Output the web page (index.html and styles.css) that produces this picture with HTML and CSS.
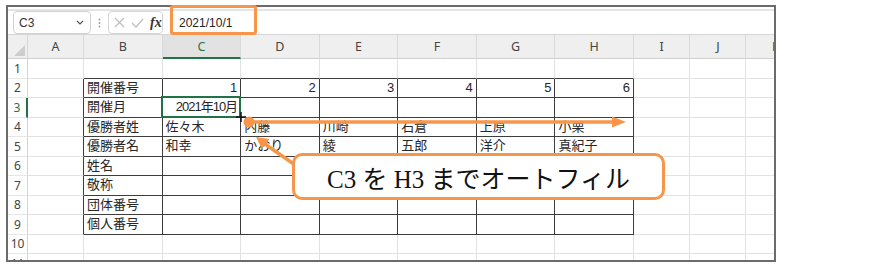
FILE: index.html
```html
<!DOCTYPE html>
<html lang="ja">
<head>
    <meta charset="UTF-8">
    <title>オートフィル</title>
    <link rel="stylesheet" href="styles.css">
</head>
<body>
<div class="page">
    <div class="frame">
        <div class="formula-bar">
            <div class="name-box">
                <span>C3</span>
                <svg width="8" height="5" viewBox="0 0 8 5"><path d="M1 1 L4 4 L7 1" fill="none" stroke="#555" stroke-width="1.2"/></svg>
            </div>
            <div class="bar-dots">
                <svg width="3" height="10" viewBox="0 0 3 10"><circle cx="1.5" cy="1.5" r="0.9" fill="#999"/><circle cx="1.5" cy="5" r="0.9" fill="#999"/><circle cx="1.5" cy="8.5" r="0.9" fill="#999"/></svg>
            </div>
            <div class="fx-box">
                <svg width="11" height="11" viewBox="0 0 11 11"><path d="M1 1 L10 10 M10 1 L1 10" stroke="#bdbdbd" stroke-width="1.2"/></svg>
                <svg width="13" height="10" viewBox="0 0 13 10"><path d="M1 5 L5 9 L12 1" fill="none" stroke="#bdbdbd" stroke-width="1.2"/></svg>
                <span class="fx">fx</span>
            </div>
            <div class="formula">2021/10/1</div>
        </div>

        <div class="sheet">
            <div class="corner"></div>
            <div class="hd">A</div><div class="hd">B</div><div class="hd on">C</div><div class="hd">D</div><div class="hd">E</div><div class="hd">F</div><div class="hd">G</div><div class="hd">H</div><div class="hd">I</div><div class="hd">J</div><div class="hd">K</div>

            <div class="rn">1</div>
            <div class="c"></div><div class="c u"></div><div class="c u"></div><div class="c u"></div><div class="c u"></div><div class="c u"></div><div class="c u"></div><div class="c u"></div><div class="c"></div><div class="c"></div><div class="c"></div>

            <div class="rn">2</div>
            <div class="c l"></div><div class="c t">開催番号</div><div class="c t n">1</div><div class="c t n">2</div><div class="c t n">3</div><div class="c t n">4</div><div class="c t n">5</div><div class="c t n">6</div><div class="c"></div><div class="c"></div><div class="c"></div>

            <div class="rn on">3</div>
            <div class="c l"></div><div class="c t">開催月</div><div class="c t n sel">2021年10月</div><div class="c t"></div><div class="c t"></div><div class="c t"></div><div class="c t"></div><div class="c t"></div><div class="c"></div><div class="c"></div><div class="c"></div>

            <div class="rn">4</div>
            <div class="c l"></div><div class="c t">優勝者姓</div><div class="c t">佐々木</div><div class="c t">内藤</div><div class="c t">川崎</div><div class="c t">石倉</div><div class="c t">上原</div><div class="c t">小栗</div><div class="c"></div><div class="c"></div><div class="c"></div>

            <div class="rn">5</div>
            <div class="c l"></div><div class="c t">優勝者名</div><div class="c t">和幸</div><div class="c t">かおり</div><div class="c t">綾</div><div class="c t">五郎</div><div class="c t">洋介</div><div class="c t">真紀子</div><div class="c"></div><div class="c"></div><div class="c"></div>

            <div class="rn">6</div>
            <div class="c l"></div><div class="c t">姓名</div><div class="c t"></div><div class="c t"></div><div class="c t"></div><div class="c t"></div><div class="c t"></div><div class="c t"></div><div class="c"></div><div class="c"></div><div class="c"></div>

            <div class="rn">7</div>
            <div class="c l"></div><div class="c t">敬称</div><div class="c t"></div><div class="c t"></div><div class="c t"></div><div class="c t"></div><div class="c t"></div><div class="c t"></div><div class="c"></div><div class="c"></div><div class="c"></div>

            <div class="rn">8</div>
            <div class="c l"></div><div class="c t">団体番号</div><div class="c t"></div><div class="c t"></div><div class="c t"></div><div class="c t"></div><div class="c t"></div><div class="c t"></div><div class="c"></div><div class="c"></div><div class="c"></div>

            <div class="rn">9</div>
            <div class="c l"></div><div class="c t">個人番号</div><div class="c t"></div><div class="c t"></div><div class="c t"></div><div class="c t"></div><div class="c t"></div><div class="c t"></div><div class="c"></div><div class="c"></div><div class="c"></div>

            <div class="rn">10</div>
            <div class="c"></div><div class="c"></div><div class="c"></div><div class="c"></div><div class="c"></div><div class="c"></div><div class="c"></div><div class="c"></div><div class="c"></div><div class="c"></div><div class="c"></div>

            <div class="rn">11</div>
            <div class="c"></div><div class="c"></div><div class="c"></div><div class="c"></div><div class="c"></div><div class="c"></div><div class="c"></div><div class="c"></div><div class="c"></div><div class="c"></div><div class="c"></div>
        </div>
    </div>

    <!-- annotations -->
    <div class="highlight"></div>
    <svg class="arrows" width="889" height="266" viewBox="0 0 889 266">
        <path d="M236 117 H246 M241 112 V122" stroke="#111" stroke-width="1.5"/>
        <circle cx="249" cy="122" r="5.5" fill="#f7964a"/>
        <path d="M249 122 H614" stroke="#f7964a" stroke-width="3.5"/>
        <polygon points="612,116.5 626,122 612,127.5" fill="#f7964a"/>
        <path d="M298 167 L265 144" stroke="#f7964a" stroke-width="3.5"/>
        <polygon points="256,137 269.5,139 262,149" fill="#f7964a"/>
    </svg>
    <div class="callout">C3 を H3 までオートフィル</div>
</div>
</body>
</html>
```

FILE: styles.css
```css
* {
    margin: 0;
    padding: 0;
    box-sizing: border-box;
}

body {
    background: #fff;
    font-family: "Noto Sans", sans-serif;
    color: #222;
}

.page {
    position: relative;
    width: 889px;
    height: 266px;
    padding: 5px 0 0 6px;
}

.frame {
    width: 770px;
    height: 257px;
    border: 2px solid #6b6b6b;
    overflow: hidden;
}

/* formula bar */
.formula-bar {
    display: flex;
    height: 26px;
    margin-top: 2px;
    padding-left: 5px;
    border-top: 2px solid #e4e4e4;
    border-bottom: 1px solid #d6d6d6;
}

.name-box {
    width: 78px;
    display: flex;
    align-items: center;
    justify-content: space-between;
    padding: 0 6px 0 5px;
    border: 1px solid #d2d2d2;
    border-radius: 4px;
    font-family: "Liberation Sans", sans-serif;
    font-size: 12px;
    color: #333;
}

.bar-dots {
    width: 17px;
    display: flex;
    align-items: center;
    justify-content: center;
}

.fx-box {
    width: 55px;
    display: flex;
    align-items: center;
    gap: 6px;
    padding-left: 5px;
    border: 1px solid #d6d6d6;
    border-radius: 4px;
}

.fx {
    font-family: "Liberation Serif", serif;
    font-style: italic;
    font-weight: bold;
    font-size: 14px;
    color: #333;
}

.formula {
    flex: 1;
    display: flex;
    align-items: center;
    margin-left: 7px;
    padding-left: 9px;
    font-family: "Liberation Sans", sans-serif;
    font-size: 12px;
    color: #222;
}

/* sheet grid */
.sheet {
    display: grid;
    grid-template-columns: 20px 56px repeat(7, 78.57px) 56.5px 56px 60px;
    grid-template-rows: 24px repeat(11, 19.5px);
    width: max-content;
}

.corner {
    position: relative;
    background: #efefef;
    border-right: 1px solid #d6d6d6;
    border-bottom: 1px solid #cfcfcf;
}

.corner::after {
    content: "";
    position: absolute;
    right: 2px;
    bottom: 2px;
    border-left: 11px solid transparent;
    border-bottom: 11px solid #cdcdcd;
}

.hd {
    display: flex;
    align-items: center;
    justify-content: center;
    background: #efefef;
    border-right: 1px solid #d9d9d9;
    border-bottom: 1px solid #cfcfcf;
    font-size: 12.5px;
    color: #444;
}

.hd.on {
    background: #e2e2e2;
    color: #217346;
    border-bottom: 2px solid #217346;
}

.rn {
    display: flex;
    align-items: center;
    justify-content: center;
    border-right: 1px solid #d4d4d4;
    border-bottom: 1px solid #e6e6e6;
    font-size: 12px;
    color: #444;
}

.rn.on {
    color: #217346;
    border-right: 2px solid #217346;
}

.c {
    padding: 0 3px;
    border-right: 1px solid #e2e2e2;
    border-bottom: 1px solid #e2e2e2;
    font-family: "Liberation Sans", "Noto Sans CJK JP", sans-serif;
    font-size: 13px;
    line-height: 18px;
    white-space: nowrap;
    overflow: hidden;
    color: #262626;
}

.c.u {
    border-bottom-color: #3d3d3d;
}

.c.l {
    border-right-color: #3d3d3d;
}

.c.t {
    border-right-color: #3d3d3d;
    border-bottom-color: #3d3d3d;
}

.c.n {
    text-align: right;
}

.c.sel {
    position: relative;
    overflow: visible;
    letter-spacing: -1px;
}

.c.sel::after {
    content: "";
    position: absolute;
    left: -2px;
    top: -2px;
    right: -1px;
    bottom: -1px;
    border: 2px solid #217346;
}

/* annotations */
.highlight {
    position: absolute;
    left: 170px;
    top: 5px;
    width: 87px;
    height: 30px;
    border: 3px solid #f7964a;
    border-radius: 3px;
}

.arrows {
    position: absolute;
    left: 0;
    top: 0;
}

.callout {
    position: absolute;
    left: 292px;
    top: 153px;
    width: 373px;
    height: 47px;
    display: flex;
    align-items: center;
    justify-content: center;
    background: #fff;
    border: 3px solid #f7964a;
    border-radius: 10px;
    font-family: "Liberation Serif", "Noto Sans CJK JP", serif;
    font-size: 25px;
    color: #111;
}
```
